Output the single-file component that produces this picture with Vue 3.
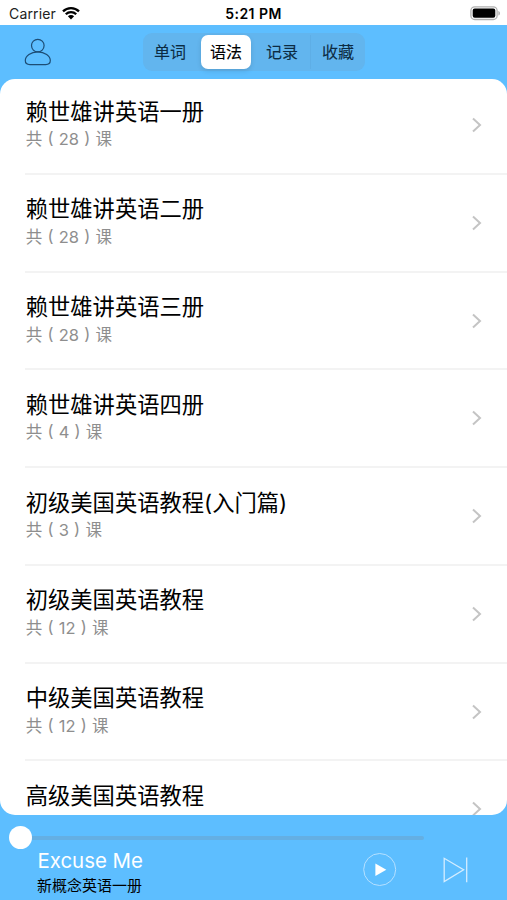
<template>
  <div class="screen">
    <div class="status-bar">
      <div class="carrier">
        <span>Carrier</span>
        <svg class="wifi" width="18" height="14" viewBox="0 0 18 14">
          <path
            d="M1 5.4a11.4 11.4 0 0 1 16 0M3.8 8.3a7.4 7.4 0 0 1 10.4 0"
            fill="none"
            stroke="#000"
            stroke-width="2.3"
          />
          <path d="M5.9 10.3a4.4 4.4 0 0 1 6.2 0L9 13.5z" />
        </svg>
      </div>
      <div class="time">5:21 PM</div>
      <svg class="battery" width="31" height="15" viewBox="0 0 31 15">
        <rect
          x="0.9"
          y="0.9"
          width="26.2"
          height="12.6"
          rx="3.8"
          fill="#fff"
          stroke="#b0b0b0"
          stroke-width="1.3"
        />
        <rect x="2.7" y="2.6" width="22.6" height="9.2" rx="2" />
        <path d="M28.4 5v4.6c2-.6 2-4 0-4.6z" fill="#aaa" />
      </svg>
    </div>

    <header class="header">
      <svg class="user" width="28" height="28" viewBox="0 0 28 28">
        <g fill="none" stroke="#1d4d75" stroke-width="1.2">
          <circle cx="13.8" cy="7.6" r="6.3" />
          <path
            d="M13.8 13.9C6.8 13.9 1.3 18 1.3 22.6c0 2.6 1.8 4 4.6 4h15.8c2.8 0 4.6-1.4 4.6-4 0-4.6-5.5-8.7-12.5-8.7z"
          />
        </g>
      </svg>
      <div class="tabs">
        <button
          v-for="tab in tabs"
          :key="tab"
          :class="['tab', { active: tab === activeTab }]"
          @click="activeTab = tab"
        >
          {{ tab }}
        </button>
      </div>
    </header>

    <main class="card">
      <ul class="list">
        <li v-for="course in courses" :key="course.name" class="row">
          <div class="row-text">
            <div class="title">{{ course.name }}</div>
            <div v-if="course.count" class="count">
              共 ( {{ course.count }} ) 课
            </div>
          </div>
          <svg class="arrow" width="12" height="16" viewBox="0 0 12 16">
            <path
              d="M2 1.6l7 6.4-7 6.4"
              fill="none"
              stroke="#c4c4c4"
              stroke-width="2"
            />
          </svg>
        </li>
      </ul>
    </main>

    <footer class="player">
      <div class="slider">
        <div class="thumb"></div>
        <div class="track"></div>
      </div>
      <div class="controls">
        <div class="song">
          <div class="song-name">Excuse Me</div>
          <div class="song-book">新概念英语一册</div>
        </div>
        <svg class="play" width="34" height="34" viewBox="0 0 34 34">
          <circle
            cx="16.7"
            cy="16.5"
            r="16"
            fill="none"
            stroke="#b5e0ff"
            stroke-width="1"
          />
          <path d="M12.4 10.4v12.6L23.3 16.7z" fill="#fff" />
        </svg>
        <svg class="next" width="26" height="26" viewBox="0 0 26 26">
          <path
            d="M1.2 1.3v23.2L20.6 12.7zM23.7 0.4v24.8"
            fill="none"
            stroke="#d4edff"
            stroke-width="1.3"
          />
        </svg>
      </div>
    </footer>
  </div>
</template>

<script setup>
import { ref } from "vue";

const tabs = ["单词", "语法", "记录", "收藏"];
const activeTab = ref("语法");

const courses = [
  { name: "赖世雄讲英语一册", count: 28 },
  { name: "赖世雄讲英语二册", count: 28 },
  { name: "赖世雄讲英语三册", count: 28 },
  { name: "赖世雄讲英语四册", count: 4 },
  { name: "初级美国英语教程(入门篇)", count: 3 },
  { name: "初级美国英语教程", count: 12 },
  { name: "中级美国英语教程", count: 12 },
  { name: "高级美国英语教程" },
];
</script>

<style>
body {
  margin: 0;
}
</style>

<style scoped>
.screen {
  display: flex;
  flex-direction: column;
  width: 507px;
  height: 900px;
  overflow: hidden;
  background-color: #5dbeff;
  font-family: Inter, "Noto Sans CJK SC", sans-serif;
  color: #000;
}
.status-bar {
  display: grid;
  grid-template-columns: 1fr auto 1fr;
  align-items: center;
  flex: none;
  height: 25px;
  padding: 1px 6px 0 9px;
  box-sizing: border-box;
  background-color: #fff;
  font-size: 14px;
  line-height: 24px;
}
.carrier {
  display: flex;
  align-items: center;
  gap: 6px;
  color: #222;
  letter-spacing: 0.15px;
}
.wifi {
  margin-top: -2px;
}
.time {
  margin: 0 1px 0 -2px;
  padding-top: 1px;
  font-weight: 600;
  font-size: 14px;
  letter-spacing: 0.45px;
}
.battery {
  justify-self: end;
}
.header {
  display: grid;
  grid-template-columns: 1fr auto 1fr;
  align-items: center;
  flex: none;
  height: 54px;
  padding: 0 23px 0 24px;
}
.tabs {
  display: flex;
  gap: 6px;
  height: 38px;
  padding: 2px;
  box-sizing: border-box;
  border-radius: 9px;
  background-color: #62b5ee;
}
.tab {
  width: 50px;
  padding: 0;
  border: 0;
  border-radius: 7px;
  background: none;
  font-family: inherit;
  font-size: 16px;
  font-weight: 400;
  line-height: 35px;
  color: #0c2b42;
  -webkit-text-stroke: 0.1px;
}
.tab.active {
  background-color: #fff;
  color: #000;
  box-shadow: 0 2px 5px rgba(0, 0, 0, 0.12);
}
.tab:nth-child(3) {
  box-shadow: 3px 0 #62b5ee, 4px 0 #5eaee6;
  border-radius: 0;
}
.card {
  flex: none;
  height: 736px;
  overflow: hidden;
  border-radius: 15px;
  background-color: #fff;
}
.list {
  margin: -2px 0 0;
  padding: 0 0 0 25px;
  list-style: none;
}
.row {
  display: flex;
  justify-content: space-between;
  height: 97.75px;
  padding: 18px 24px 0 0;
  box-sizing: border-box;
  border-bottom: 2px solid #f3f3f3;
}
.row-text {
  padding-left: 0.7px;
}
.title {
  padding-top: 0.6px;
  font-size: 22.3px;
  line-height: 32px;
  white-space: nowrap;
}
.count {
  margin-top: -0.6px;
  font-size: 16.5px;
  line-height: 24px;
  word-spacing: 0.6px;
  color: #8e8e8e;
}
.arrow {
  margin-top: 22px;
}
.player {
  flex: 1;
}
.slider {
  display: flex;
  align-items: center;
  height: 24px;
  padding: 10.5px 83px 0.5px 9px;
}
.thumb {
  width: 23px;
  height: 23px;
  border-radius: 50%;
  background-color: #fff;
}
.track {
  flex: 1;
  height: 4px;
  border-radius: 0 2px 2px 0;
  background-color: #64afe3;
}
.controls {
  display: flex;
  align-items: flex-start;
  padding: 0 38px 0 37px;
}
.song {
  flex: 1;
}
.song-name {
  padding-left: 0.5px;
  font-size: 20.4px;
  line-height: 22px;
  color: #fff;
}
.song-book {
  margin-top: 3px;
  font-size: 15px;
  line-height: 22px;
}
.play {
  margin: 3px 46px 0 0;
}
.next {
  margin-top: 7px;
}
</style>
